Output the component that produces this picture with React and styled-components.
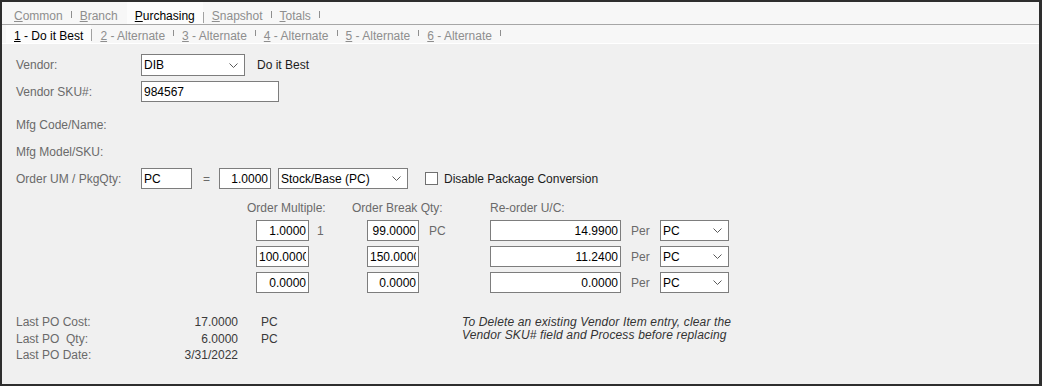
import React from 'react';
import styled, { createGlobalStyle } from 'styled-components';

const GlobalStyle = createGlobalStyle`
  * { box-sizing: border-box; }
  html, body { margin: 0; padding: 0; background: #f0f0f0; }
  body {
    font-family: "Liberation Sans", Arial, sans-serif;
    font-size: 12px;
  }
`;

const Window = styled.div`
  width: 1042px;
  height: 386px;
  border: 2px solid #2e2e2e;
  border-right-width: 3px;
  background: #f0f0f0;
  display: flex;
  flex-direction: column;
  overflow: hidden;
`;

const TabBar = styled.div`
  display: flex;
  align-items: flex-end;
  height: ${p => p.$h}px;
  padding-left: 4px;
  background: #f7f7f7;
  border-bottom: 1px solid ${p => p.$line};
  flex: none;
`;

const Tab = styled.span`
  align-self: stretch;
  display: flex;
  align-items: flex-end;
  padding: 0 ${p => p.$pr}px ${p => p.$pb}px ${p => p.$pl}px;
  line-height: 14px;
  white-space: nowrap;
  color: ${p => (p.$active ? '#000' : '#8e8e8e')};
  background: ${p => (p.$active ? '#fcfcfc' : 'transparent')};

  u { text-decoration: underline; }
`;

const Sep = styled.span`
  flex: none;
  width: 1px;
  height: ${p => p.$h}px;
  margin-bottom: ${p => p.$mb}px;
  background: ${p => (p.$hidden ? 'transparent' : p.$tall ? '#a2a2a2' : '#8f8f8f')};
`;

const Panel = styled.div`
  flex: 1;
  display: flex;
  flex-direction: column;
  padding: 10px 0 0 14px;
  color: #6a6a6a;
`;

const FormRow = styled.div`
  display: flex;
  align-items: center;
  height: ${p => p.$h}px;
  margin-top: ${p => p.$mt}px;
  flex: none;
`;

const Label = styled.div`
  width: 125px;
  flex: none;
  white-space: nowrap;
`;

const Text = styled.span`
  margin-left: ${p => p.$ml || 0}px;
  color: ${p => p.$dark ? '#1c1c1c' : '#6a6a6a'};
  white-space: nowrap;
`;

const Input = styled.input`
  width: ${p => p.$w}px;
  height: ${p => p.$h || 21}px;
  margin: 0 0 0 ${p => p.$ml || 0}px;
  padding: 0 2px;
  border: 1px solid #7d7d7d;
  background: #fff;
  font: inherit;
  color: #000;
  text-align: ${p => p.$align || 'left'};
  outline: none;
  justify-self: ${p => p.$justify || 'stretch'};
  flex: none;
`;

const SelectBox = styled.div`
  width: ${p => p.$w}px;
  height: ${p => p.$h || 21}px;
  margin-left: ${p => p.$ml || 0}px;
  padding: 0 6px 0 2px;
  border: 1px solid #7d7d7d;
  background: #fff;
  color: #000;
  display: flex;
  align-items: center;
  justify-content: space-between;
  white-space: nowrap;
  flex: none;
`;

const Check = styled.span`
  width: 13px;
  height: 13px;
  margin-left: ${p => p.$ml}px;
  border: 1px solid #707070;
  background: #fff;
  flex: none;
`;

const CostGrid = styled.div`
  margin: 13px 0 0 231px;
  display: grid;
  grid-template-columns: 62px 43px 67px 71px 131px 39px 69px;
  grid-template-rows: 13px 21px 21px 21px;
  row-gap: 5px;
  align-items: center;
`;

const ColHead = styled.div`
  line-height: 13px;
  white-space: nowrap;
`;

const Unit = styled.div`
  padding-left: ${p => p.$pl}px;
  white-space: nowrap;
`;

const Bottom = styled.div`
  display: flex;
  margin-top: 21px;
`;

const LastGrid = styled.div`
  display: grid;
  grid-template-columns: 166px 56px 65px;
  grid-auto-rows: 16.5px;
  align-items: center;
`;

const LastValue = styled.div`
  text-align: right;
  color: #3a3a3a;
  white-space: nowrap;
`;

const LastUnit = styled.div`
  padding-left: 23px;
  color: #3a3a3a;
`;

const Note = styled.div`
  margin-left: 159px;
  padding-top: 1.5px;
  font-style: italic;
  line-height: 13px;
  letter-spacing: 0.15px;
  color: #333;
`;

const Chevron = () => (
  <svg width="9" height="5" viewBox="0 0 9 5">
    <polyline points="0.5,0.5 4.5,4.5 8.5,0.5" fill="none" stroke="#5a5a5a" strokeWidth="1" />
  </svg>
);

const Select = ({ value, ...rest }) => (
  <SelectBox {...rest}>
    <span>{value}</span>
    <Chevron />
  </SelectBox>
);

const mainTabs = [
  { key: 'C', rest: 'ommon' },
  { key: 'B', rest: 'ranch' },
  { key: 'P', rest: 'urchasing', active: true },
  { key: 'S', rest: 'napshot' },
  { key: 'T', rest: 'otals' },
];

const vendorTabs = [
  { key: '1', rest: ' - Do it Best', active: true },
  { key: '2', rest: ' - Alternate' },
  { key: '3', rest: ' - Alternate' },
  { key: '4', rest: ' - Alternate' },
  { key: '5', rest: ' - Alternate' },
  { key: '6', rest: ' - Alternate' },
];

const headers = ['Order Multiple:', '', 'Order Break Qty:', '', 'Re-order U/C:', '', ''];

const breaks = [
  { mult: '1.0000', multUnit: '1', qty: '99.0000', qtyUnit: 'PC', cost: '14.9900' },
  { mult: '100.0000', qty: '150.0000', cost: '11.2400' },
  { mult: '0.0000', qty: '0.0000', cost: '0.0000' },
];

const TabStrip = ({ tabs, h, line, pb, sepShort, sepTall }) => (
  <TabBar $h={h} $line={line}>
    {tabs.map((t, i) => {
      const nextActive = tabs[i + 1] && tabs[i + 1].active;
      const sep = t.active ? sepTall : sepShort;
      return (
        <React.Fragment key={i}>
          <Tab $active={t.active} $pl={8} $pr={8} $pb={pb}>
            <span><u>{t.key}</u>{t.rest}</span>
          </Tab>
          <Sep $h={sep.h} $mb={sep.mb} $tall={t.active} $hidden={nextActive} />
        </React.Fragment>
      );
    })}
  </TabBar>
);

export default function App() {
  return (
    <>
      <GlobalStyle />
      <Window>
        <TabStrip tabs={mainTabs} h={23} line="#a6a6a6" pb={1}
          sepShort={{ h: 7, mb: 6 }} sepTall={{ h: 11, mb: 1 }} />
        <TabStrip tabs={vendorTabs} h={19} line="#ffffff" pb={0}
          sepShort={{ h: 6, mb: 7 }} sepTall={{ h: 12, mb: 2 }} />
        <Panel>
          <FormRow $h={22} $mt={0}>
            <Label>Vendor:</Label>
            <Select value="DIB" $w={104} $h={22} />
            <Text $ml={12} $dark>Do it Best</Text>
          </FormRow>
          <FormRow $h={21} $mt={5}>
            <Label>Vendor SKU#:</Label>
            <Input readOnly value="984567" $w={138} />
          </FormRow>
          <FormRow $h={21} $mt={12}>
            <Label>Mfg Code/Name:</Label>
          </FormRow>
          <FormRow $h={21} $mt={6}>
            <Label>Mfg Model/SKU:</Label>
          </FormRow>
          <FormRow $h={21} $mt={6}>
            <Label>Order UM / PkgQty:</Label>
            <Input readOnly value="PC" $w={51} />
            <Text $ml={11}>=</Text>
            <Input readOnly value="1.0000" $w={52} $ml={9} $align="right" />
            <Select value="Stock/Base (PC)" $w={130} $ml={7} />
            <Check $ml={17} />
            <Text $ml={6} $dark>Disable Package Conversion</Text>
          </FormRow>

          <CostGrid>
            {headers.map((h, i) => (
              <ColHead key={i}>{h}</ColHead>
            ))}
            {breaks.map((b, i) => (
              <React.Fragment key={i}>
                <Input readOnly value={b.mult} $w={53} $align="right" $justify="end" />
                <Unit $pl={8}>{b.multUnit}</Unit>
                <Input readOnly value={b.qty} $w={52} $align="right" $justify="end" />
                <Unit $pl={10}>{b.qtyUnit}</Unit>
                <Input readOnly value={b.cost} $w={131} $align="right" />
                <Unit $pl={10}>Per</Unit>
                <Select value="PC" $w={69} />
              </React.Fragment>
            ))}
          </CostGrid>

          <Bottom>
            <LastGrid>
              <div>Last PO Cost:</div>
              <LastValue>17.0000</LastValue>
              <LastUnit>PC</LastUnit>
              <div>Last PO{'\u00a0'} Qty:</div>
              <LastValue>6.0000</LastValue>
              <LastUnit>PC</LastUnit>
              <div>Last PO Date:</div>
              <LastValue>3/31/2022</LastValue>
              <LastUnit />
            </LastGrid>
            <Note>
              To Delete an existing Vendor Item entry, clear the<br />
              Vendor SKU# field and Process before replacing
            </Note>
          </Bottom>
        </Panel>
      </Window>
    </>
  );
}
